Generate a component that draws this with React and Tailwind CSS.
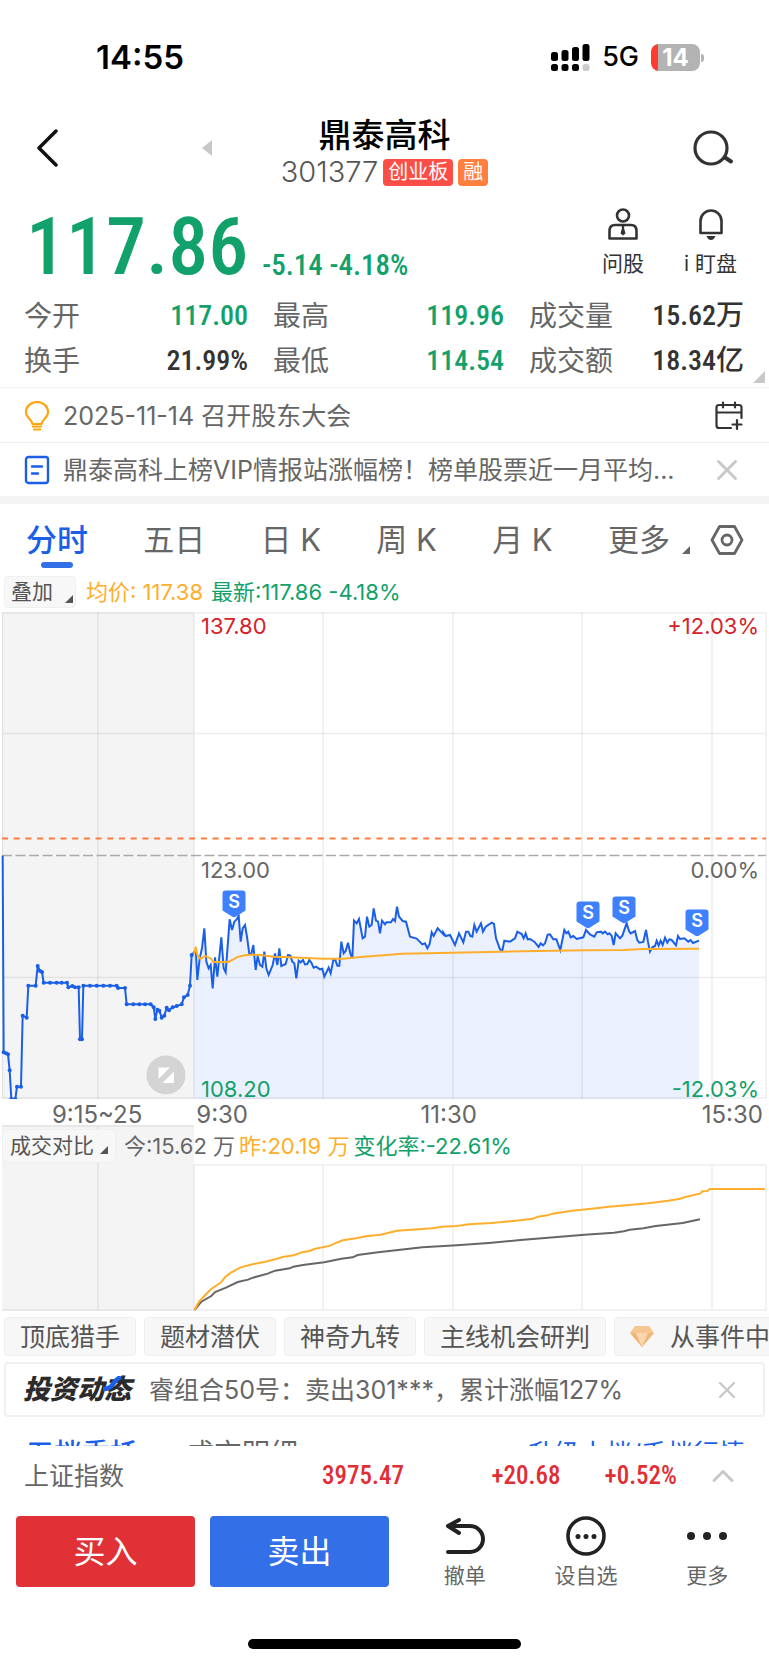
import React from 'react';
import { X, ChevronUp } from 'lucide-react';

const stats = [
  { label: '今开', value: '117.00', green: true },
  { label: '最高', value: '119.96', green: true },
  { label: '成交量', value: '15.62万' },
  { label: '换手', value: '21.99%' },
  { label: '最低', value: '114.54', green: true },
  { label: '成交额', value: '18.34亿' },
];

const tabs = ['五日', '日 K', '周 K', '月 K'];

const chips = ['顶底猎手', '题材潜伏', '神奇九转', '主线机会研判'];

// call auction ticks, 9:15 to 9:25
const AUCTION =
  '8,107 11,697 18,700 24,703 29,751 34,837 46,837 51,800 63,800 68,587 80,593 85,497 107,497 113,438 120,453 126,456 131,488 150,488 170,488 185,488 201,488 205,502 217,498 225,502 236,502 240,658 246,658 250,497 270,497 290,497 310,497 330,497 350,497 354,504 375,504 380,553 400,553 418,553 435,553 452,553 461,562 466,597 472,569 478,572 485,593 493,587 500,563 507,571 518,562 530,558 545,553 552,532 563,525 570,497 575,405';

// minute prices from 9:30
const PRICE =
  '575,405 584,395 588,402 592,480 599,415 606,385 613,325 619,425 626,445 632,435 638,505 645,412 652,470 664,352 671,445 677,457 689,298 696,330 703,305 710,298 716,288 722,365 728,325 735,315 741,350 748,402 754,402 760,375 767,450 773,408 780,435 787,440 793,395 799,445 806,465 818,435 825,400 832,435 838,385 844,438 857,432 864,405 871,407 877,425 883,430 889,475 896,422 902,427 909,420 915,433 922,432 928,420 934,428 941,443 948,440 960,448 967,446 973,470 986,443 992,460 1000,420 1006,420 1012,437 1018,437 1024,365 1031,400 1037,393 1044,368 1051,400 1057,415 1062,302 1070,310 1077,297 1088,355 1095,350 1101,290 1108,320 1115,315 1121,265 1128,302 1134,305 1140,340 1146,302 1155,313 1159,307 1173,307 1179,297 1185,303 1191,260 1197,290 1208,303 1218,305 1230,350 1250,356 1267,373 1275,370 1282,385 1289,372 1295,337 1301,348 1313,325 1330,343 1330,337 1337,348 1350,345 1365,375 1377,340 1390,367 1398,335 1405,335 1411,348 1417,350 1423,315 1430,335 1443,310 1449,335 1457,320 1475,308 1482,312 1488,355 1500,388 1507,392 1513,362 1530,365 1545,355 1552,335 1565,342 1571,355 1577,340 1583,358 1590,357 1603,365 1616,381 1622,370 1629,376 1635,370 1643,344 1650,343 1660,358 1669,358 1681,390 1693,330 1699,340 1705,335 1712,352 1720,348 1730,357 1750,352 1758,330 1770,343 1783,350 1790,337 1803,335 1808,340 1815,335 1823,343 1828,340 1835,347 1841,375 1847,340 1860,355 1867,347 1880,310 1887,333 1892,340 1905,333 1912,360 1918,368 1930,366 1938,330 1944,365 1950,395 1957,382 1965,378 1970,362 1976,377 1982,362 1988,375 1995,353 2002,368 2008,358 2015,360 2028,376 2034,348 2040,357 2053,355 2065,365 2072,360 2079,369 2097,362';

const AVERAGE =
  '582,402 587,382 592,405 602,417 615,408 625,412 632,415 640,426 685,426 700,418 715,410 735,406 755,404 780,405 820,410 870,412 970,416 1030,416 1060,413 1080,411 1120,408 1170,404 1205,401 1355,398 1505,395 1755,391 1870,390 1930,387 2097,386';

const VOL_YESTERDAY =
  '396,570 405,545 418,525 430,507 450,487 458,472 470,458 490,442 510,434 540,425 560,418 575,411 598,406 615,397 630,393 640,387 672,377 682,370 698,361 725,355 745,349 775,344 808,332 880,325 900,320 930,318 955,313 1000,309 1050,302 1085,296 1095,290 1115,286 1125,281 1165,272 1200,267 1240,260 1320,250 1360,242 1385,236 1395,231 1425,221 1430,214 1440,213 1445,207 1557,207';

const VOL_TODAY =
  '396,570 410,545 430,528 438,516 460,503 484,486 505,479 515,473 545,461 560,452 590,445 597,440 620,434 660,427 695,416 718,412 728,405 770,397 860,382 930,376 995,369 1060,360 1190,344 1250,338 1270,334 1282,329 1310,325 1335,318 1390,309 1425,298';

const SELL_MARKS = [
  [234, 290],
  [588, 301],
  [624, 296],
  [697, 309],
];

const GRID_X = [98, 323, 453, 582, 712];

function Corner({ className = '' }) {
  return (
    <svg viewBox="0 0 10 10" className={`size-2 ${className}`} aria-hidden="true">
      <path d="M10 0v10H0z" fill="currentColor" />
    </svg>
  );
}

function StatusBar() {
  return (
    <div className="flex h-[115px] items-center justify-between pr-[65px] pl-24">
      <span className="text-[33px] font-semibold">14:55</span>
      <div className="flex items-center gap-3">
        <svg viewBox="0 0 39 28" className="h-7 w-[39px]" aria-hidden="true">
          <rect x="0" y="8" width="7" height="9" rx="2.5" />
          <rect x="10.5" y="6" width="7" height="11" rx="2.5" />
          <rect x="21" y="3" width="7" height="14" rx="2.5" />
          <rect x="31.5" y="0" width="7" height="17" rx="2.5" />
          <rect x="0" y="20" width="7" height="7" rx="2.5" />
          <rect x="10.5" y="20" width="7" height="7" rx="2.5" />
          <rect x="21" y="20" width="7" height="7" rx="2.5" />
          <rect x="31.5" y="20" width="7" height="7" rx="2.5" fill="#ccc" />
        </svg>
        <span className="text-[27px] font-medium">5G</span>
        <div className="flex items-center gap-px">
          <div className="flex h-[27px] w-[49px] items-center justify-center rounded-lg bg-linear-to-r from-[#ff3b30] from-15% to-[#b3b3b3] to-15% text-2xl font-bold text-white">
            14
          </div>
          <div className="h-2 w-[3px] rounded-r-full bg-[#b3b3b3]" />
        </div>
      </div>
    </div>
  );
}

function Header() {
  return (
    <header className="flex h-[74px] items-center pr-[34px] pl-9">
      <button type="button" aria-label="返回" className="-mt-2">
        <svg viewBox="0 0 22 38" className="h-[38px] w-[22px]" fill="none" stroke="#111" strokeWidth="3.5" strokeLinecap="round" strokeLinejoin="round">
          <path d="M20 2 3 19l17 17" />
        </svg>
      </button>
      <button type="button" aria-label="上一只" className="-mt-2 ml-36">
        <svg viewBox="0 0 10 16" className="h-4 w-[10px]" fill="#c8c8c8">
          <path d="M10 0v16L0 8z" />
        </svg>
      </button>
      <div className="flex flex-1 flex-col items-center pr-[136px]">
        <h1 className="h-10 text-[33px] leading-[38px] font-medium">鼎泰高科</h1>
        <div className="flex h-8 items-center gap-[5px]">
          <span className="text-[29px] leading-8 font-light text-[#555]">301377</span>
          <span className="flex h-[27px] items-center rounded bg-[#fb4e46] px-[5px] text-xl text-white">创业板</span>
          <span className="flex h-[27px] items-center rounded bg-[#ff7f3f] px-[5px] text-xl text-white">融</span>
        </div>
      </div>
      <button type="button" aria-label="搜索" className="-mt-2">
        <svg viewBox="0 0 42 36" className="h-9 w-[42px]" fill="none" stroke="#333" strokeWidth="3.2" strokeLinecap="round">
          <circle cx="18" cy="18" r="16" />
          <path d="M32 27.5l6 4" strokeWidth="4" />
        </svg>
      </button>
    </header>
  );
}

function Quote() {
  return (
    <section className="relative pb-1">
      <div className="flex h-[104px] items-end pr-8 pl-[26px]">
        <p className="pb-[6px] text-[80px] leading-none font-medium text-[#12a16b] font-['Roboto_Condensed','Roboto',sans-serif]">
          117.86
        </p>
        <p className="ml-[14px] flex-1 pb-3 text-[29px] leading-8 font-medium text-[#12a16b] font-['Roboto_Condensed','Roboto',sans-serif]">
          -5.14 -4.18%
        </p>
        <div className="flex gap-10 pb-[17px] text-[21px] leading-6 text-[#333]">
          <button type="button" className="flex flex-col items-center gap-3">
            <svg viewBox="0 0 30 32" className="h-8 w-[30px]" fill="none" stroke="#333" strokeWidth="2.6">
              <circle cx="15" cy="7.5" r="6" />
              <path d="M7 17h16q5.5 0 5.5 6v7.5h-27V23q0-6 5.5-6z" strokeLinejoin="round" />
              <path d="M13.5 17.5h3l-.5 2.5 1.5 5.5-2.5 2-2.5-2L14 20z" fill="#333" stroke="none" />
            </svg>
            问股
          </button>
          <button type="button" className="flex flex-col items-center gap-3">
            <svg viewBox="0 0 26 32" className="h-8 w-[26px]" fill="none" stroke="#333" strokeWidth="2.6">
              <path d="M2.5 25V13a10.5 10.5 0 0 1 21 0v12z" strokeLinejoin="round" />
              <path d="M8.5 28h9q-1.5 4-4.5 4t-4.5-4z" fill="#333" stroke="none" />
            </svg>
            i 盯盘
          </button>
        </div>
      </div>
      <dl className="grid grid-cols-[224fr_231fr_215fr] gap-x-[25px] pr-[25px] pl-6">
        {stats.map((s) => (
          <div key={s.label} className="flex h-[45px] items-center justify-between">
            <dt className="text-[28px] leading-8 text-[#666]">{s.label}</dt>
            <dd
              className={`text-[28px] leading-8 font-medium font-['Roboto_Condensed','Roboto','Noto_Sans_CJK_SC',sans-serif] ${
                s.green ? 'text-[#12a16b]' : 'text-[#333]'
              }`}
            >
              {s.value}
            </dd>
          </div>
        ))}
      </dl>
      <Corner className="absolute right-1 bottom-1 size-3 text-[#c8c8c8]" />
    </section>
  );
}

function NewsRows() {
  return (
    <section className="border-b-8 border-[#f4f4f4] text-[25px] leading-8 text-[#666]">
      <div className="flex h-[55px] items-center border-t border-[#f0f0f0] pt-[2px] pr-[25px] pl-6">
        <svg viewBox="0 0 26 30" className="mr-[13px] h-[30px] w-[26px]" fill="none" stroke="#ffa50f" strokeWidth="2.2">
          <path d="M8.5 23c0-4-6.5-6-6.5-12a11 10 0 0 1 22 0c0 6-6.5 8-6.5 12z" strokeLinejoin="round" />
          <path d="M8 25.5h10M9 28.5h8" />
        </svg>
        <p className="flex-1">2025-11-14 召开股东大会</p>
        <button type="button" aria-label="添加日程">
          <svg viewBox="0 0 30 30" className="size-[30px]" fill="none" stroke="#333" strokeWidth="2.2" strokeLinecap="round">
            <path d="M17 27H5q-2.5 0-2.5-2.5v-18Q2.500 4 5 4h20q2.5 0 2.5 2.5V17M2.5 11.5h25M9 1.5v5M21 1.5v5M23 19v9M18.5 23.5h9" />
          </svg>
        </button>
      </div>
      <div className="flex h-[54px] items-center border-t border-[#f0f0f0] pr-[25px] pl-6">
        <svg viewBox="0 0 26 30" className="mr-[13px] h-[30px] w-[26px] shrink-0" fill="none" stroke="#1a5fe6" strokeWidth="2.4" strokeLinecap="round">
          <rect x="2" y="2" width="22" height="26" rx="2.5" />
          <path d="M8 11.5h10M8 18.5h6" />
        </svg>
        <p className="min-w-0 flex-1 whitespace-nowrap">鼎泰高科上榜VIP情报站涨幅榜！榜单股票近一月平均...</p>
        <button type="button" aria-label="关闭资讯">
          <X size={34} strokeWidth={2} className="text-[#c8c8c8]" />
        </button>
      </div>
    </section>
  );
}

function PeriodTabs() {
  return (
    <nav className="flex h-[72px] items-center justify-between pr-[25px] pl-[26px] text-[31px] leading-10 text-[#666]">
      <button type="button" className="relative font-medium text-[#1a5fe6]">
        分时
        <span className="absolute -bottom-2 left-1/2 h-[6px] w-8 -translate-x-1/2 rounded-full bg-[#3370e8]" />
      </button>
      {tabs.map((t) => (
        <button key={t} type="button">
          {t}
        </button>
      ))}
      <div className="flex items-center">
        <button type="button" className="flex items-end">
          更多
          <Corner className="mb-[6px] ml-3" />
        </button>
        <button type="button" aria-label="图表设置" className="ml-5">
          <svg viewBox="0 0 34 32" className="h-8 w-[34px]" fill="none" stroke="#666" strokeWidth="2.8" strokeLinejoin="round">
            <path d="M9.5 2.5h15L32 16l-7.500 13.5h-15L2 16z" />
            <circle cx="17" cy="16" r="5" />
          </svg>
        </button>
      </div>
    </nav>
  );
}

function PriceChart() {
  const area = `582,838 582,400 ${PRICE.slice(PRICE.indexOf(' ') + 1)} 2097,838`;
  return (
    <div className="relative text-[22px] leading-7">
      <svg viewBox="0 0 769 487" className="block w-full">
        <rect x="2" y="0" width="192" height="487" fill="#f4f4f4" />
        <g transform="translate(0 208) scale(.33333)">
          <polygon points={area} fill="#eaf0fe" />
        </g>
        <g stroke="#000" strokeOpacity=".07" strokeWidth="1.5" fill="none">
          <path d="M2 1h764M2 121.5h764M2 365.5h764M2 486h764M194 0v487M766 0v487M2.5 0v487" />
          {GRID_X.map((x) => (
            <path key={x} d={`M${x} 0v487`} />
          ))}
        </g>
        <path d="M2 226.5h764" stroke="#ff7a3c" strokeWidth="2" strokeDasharray="6 5.7" />
        <path d="M2 243.5h764" stroke="#aaa" strokeWidth="1.3" strokeDasharray="10 3.5" />
        <g transform="translate(0 208) scale(.33333)" fill="none" strokeLinejoin="round">
          <polyline points={AUCTION} stroke="#1a5fe6" strokeWidth="6" />
          {AUCTION.split(' ').slice(1).map((p, i) => {
            const [x, y] = p.split(',');
            return <circle key={i} cx={x} cy={y} r="6" fill="#1a5fe6" />;
          })}
          <polyline points={PRICE} stroke="#1a5fe6" strokeWidth="6" strokeLinejoin="miter" />
          <polyline points={AVERAGE} stroke="#ffae2b" strokeWidth="6" />
        </g>
        {SELL_MARKS.map(([x, y]) => (
          <g key={x} transform={`translate(${x} ${y})`}>
            <path d="M-8.5-11.5h17q3 0 3 3v17l-9.5 6q-2 1.5-4 0l-9.500-6v-17q0-3 3-3z" fill="#3f80ff" />
            <text y="6" textAnchor="middle" fill="#fff" className="text-[18px] font-semibold">
              S
            </text>
          </g>
        ))}
        <circle cx="166" cy="463" r="19.5" fill="#d4d4d4" />
        <path d="M158.5 455.5H170L158.5 467zM174 459.5V471h-11.5z" fill="#fff" />
      </svg>
      <span className="absolute top-0 left-[26%] pl-px text-[#d4232b]">137.80</span>
      <span className="absolute top-0 right-[10px] text-[#d4232b]">+12.03%</span>
      <span className="absolute top-1/2 left-[26%] pl-px text-[#666]">123.00</span>
      <span className="absolute top-1/2 right-[10px] text-[#666]">0.00%</span>
      <span className="absolute -bottom-1 left-[26%] pl-px text-[#12a16b]">108.20</span>
      <span className="absolute right-[10px] -bottom-1 text-[#12a16b]">-12.03%</span>
    </div>
  );
}

function VolumeChart() {
  return (
    <div className="relative">
      <svg viewBox="0 0 769 186" className="block w-full">
        <rect x="2" y="0" width="192" height="186" fill="#f4f4f4" />
        <g stroke="#000" strokeOpacity=".07" strokeWidth="1.5">
          <path d="M2 1h192M194 40h572M2 185h764M98 0v186M194 40v146M766 40v146M323 40v146M453 40v146M582 40v146M712 40v146" />
        </g>
        <g transform="translate(0 -5) scale(.4912 .33333)" fill="none" strokeWidth="2">
          <polyline points={VOL_TODAY} stroke="#666" vectorEffect="non-scaling-stroke" />
          <polyline points={VOL_YESTERDAY} stroke="#ffae2b" vectorEffect="non-scaling-stroke" />
        </g>
      </svg>
      <div className="absolute inset-x-0 top-1 flex items-center pl-[2px] text-[22px] leading-8">
        <button type="button" className="flex items-end rounded border border-[#f0f0f0] bg-[#f7f7f7] px-[7px] text-[21px] leading-8 text-[#555]">
          成交对比
          <Corner className="mb-2 ml-[6px]" />
        </button>
        <span className="ml-2 text-[#666]">今:15.62 万</span>
        <span className="ml-1 text-[#ffae2b]">昨:20.19 万</span>
        <span className="ml-1 text-[#12a16b]">变化率:-22.61%</span>
      </div>
    </div>
  );
}

function Chips() {
  return (
    <div className="flex h-[51px] gap-2 overflow-hidden py-[6px] pl-1 text-[25px] leading-8 text-[#555]">
      {chips.map((c) => (
        <button key={c} type="button" className="shrink-0 rounded border border-[#efefef] bg-[#f7f7f7] px-[15px]">
          {c}
        </button>
      ))}
      <button type="button" className="flex min-w-0 flex-1 items-center gap-4 overflow-hidden rounded-l border border-r-0 border-[#efefef] bg-[#f7f7f7] pl-[15px] whitespace-nowrap">
        <svg viewBox="0 0 24 21" className="h-[21px] w-6 shrink-0">
          <path d="M5 0h14l5 7-12 14L0 7z" fill="#f5c690" />
          <path d="M0 7h24L12 21z" fill="#efb878" />
          <path d="M6 7h12l-6 14z" fill="#f9d6ab" />
        </svg>
        从事件中
      </button>
    </div>
  );
}

function Promo() {
  return (
    <div className="mx-1 flex h-[55px] items-center rounded border-2 border-[#f0f0f0] pr-[22px] pl-[17px] text-[25px] leading-8">
      <div className="relative text-[27px] font-black text-[#2b2b2b] italic">
        投资动态
        <svg viewBox="0 0 20 16" className="absolute top-[2px] right-2 h-4 w-5" fill="none" stroke="#1a5fe6" strokeWidth="4.5">
          <path d="M0 13q7 0 10-5t8-7" />
        </svg>
      </div>
      <p className="ml-[18px] flex-1 whitespace-nowrap text-[#666]">睿组合50号：卖出301***，累计涨幅127%</p>
      <button type="button" aria-label="关闭动态">
        <X size={28} strokeWidth={2} className="text-[#c8c8c8]" />
      </button>
    </div>
  );
}

function BottomBar() {
  return (
    <footer>
      <div className="flex h-[60px] items-center pr-7 pl-6 text-[25px] leading-8 text-[#666]">
        <span className="w-[250px]">上证指数</span>
        <div className="flex flex-1 items-center justify-end font-medium text-[#e02e34] font-['Roboto_Condensed','Roboto',sans-serif]">
          <span className="flex-1 pl-12">3975.47</span>
          <span>+20.68</span>
          <span className="ml-11">+0.52%</span>
        </div>
        <button type="button" aria-label="展开指数" className="ml-7">
          <ChevronUp size={36} strokeWidth={2} className="text-[#c8c8c8]" />
        </button>
      </div>
      <div className="flex pt-[10px] pl-4">
        <button type="button" className="h-[71px] w-[179px] rounded bg-[#e03137] text-[32px] text-white">
          买入
        </button>
        <button type="button" className="ml-[15px] h-[71px] w-[179px] rounded bg-[#3370e8] text-[32px] text-white">
          卖出
        </button>
        <div className="grid flex-1 grid-cols-3 pr-px pl-[15px] text-[21px] leading-6 text-[#666]">
          <button type="button" className="flex flex-col items-center gap-2">
            <svg viewBox="0 0 40 40" className="size-10" fill="none" stroke="#222" strokeWidth="4" strokeLinecap="round" strokeLinejoin="round">
              <path d="M14 4 3 10l11 7M3 10h22a13 13 0 0 1 0 26H3" />
            </svg>
            撤单
          </button>
          <button type="button" className="flex flex-col items-center gap-2">
            <svg viewBox="0 0 40 40" className="size-10" fill="none" stroke="#222" strokeWidth="3.6">
              <circle cx="20" cy="20" r="18" />
              <path d="M12 20.5h.01M20 20.5h.01M28 20.5h.01" strokeWidth="5" strokeLinecap="round" />
            </svg>
            设自选
          </button>
          <button type="button" className="flex flex-col items-center gap-2">
            <svg viewBox="0 0 40 40" className="size-10" fill="#222">
              <circle cx="4" cy="20" r="4" />
              <circle cx="20" cy="20" r="4" />
              <circle cx="36" cy="20" r="4" />
            </svg>
            更多
          </button>
        </div>
      </div>
      <div className="mx-auto mt-[51px] h-[10px] w-[273px] rounded-full bg-black" />
      <div className="h-4" />
    </footer>
  );
}

export default function App() {
  return (
    <div className="w-full overflow-hidden bg-white text-black font-['Inter','Noto_Sans_CJK_SC',sans-serif]">
      <StatusBar />
      <Header />
      <Quote />
      <NewsRows />
      <PeriodTabs />

      {/* Chart legend */}
      <div className="flex h-9 items-center pb-1 pl-1 text-[22px] leading-8">
        <button type="button" className="flex items-end rounded border border-[#f0f0f0] bg-[#f7f7f7] pr-[2px] pl-[6px] text-[21px] leading-[30px] text-[#555]">
          叠加
          <Corner className="mb-1 ml-3" />
        </button>
        <span className="ml-[10px] text-[#ffae2b]">均价: 117.38</span>
        <span className="ml-2 text-[#12a16b]">最新:117.86 -4.18%</span>
      </div>

      <PriceChart />
      <div className="flex h-[26px] items-center pt-[6px] pr-[6px] pl-[2px] text-2xl leading-5 text-[#666]">
        <span className="w-1/4 text-center">9:15~25</span>
        <span className="w-[30%] pl-1">9:30</span>
        <span>11:30</span>
        <span className="ml-auto">15:30</span>
      </div>
      <VolumeChart />
      <Chips />
      <Promo />

      {/* Order book tabs, cut off by the bottom bar */}
      <div className="flex h-[29px] items-start overflow-hidden pt-[21px] pr-6 pl-[26px] text-[28px] leading-8 text-[#666]">
        <button type="button" className="font-medium text-[#1a5fe6]">五档委托</button>
        <button type="button" className="ml-12 flex-1 text-left">成交明细</button>
        <a href="#level2" className="text-[26px] text-[#1a5fe6]">升级十档/千档行情</a>
      </div>

      <BottomBar />
    </div>
  );
}
